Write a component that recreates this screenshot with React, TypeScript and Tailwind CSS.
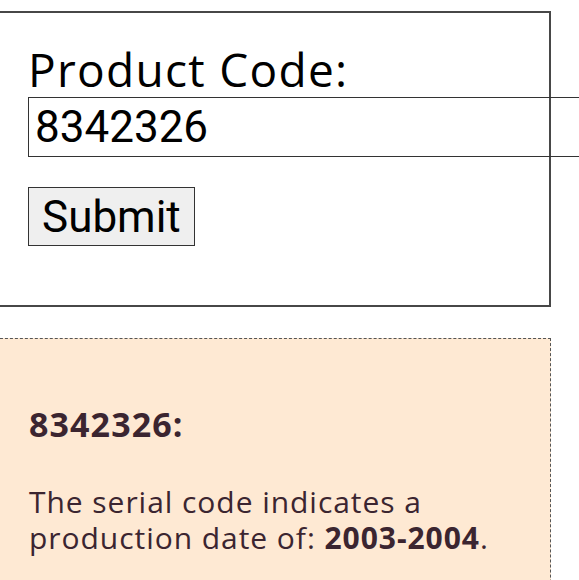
export default function App() {
  return (
    <div className="min-h-screen overflow-hidden bg-white">
      {/* Lookup form */}
      <form
        className="-ml-[10px] mt-[11px] flex h-[296px] w-[561px] flex-col border-2 border-[#474747] pl-[36px] pt-[33px]"
        onSubmit={(e) => e.preventDefault()}
      >
        <label
          htmlFor="code"
          className="block text-[46px] leading-[46px] tracking-[1.3px] text-black"
          style={{ fontFamily: '"Open Sans", sans-serif' }}
        >
          Product Code:
        </label>
        <input
          id="code"
          defaultValue="8342326"
          className="mt-[5px] h-[60px] w-[600px] shrink-0 border border-[#333] px-[6px] text-[44px] text-black outline-none"
          style={{ fontFamily: "Roboto, sans-serif" }}
        />
        <div>
          <button
            type="submit"
            className="mt-[30px] h-[59px] border border-[#333] bg-[#efefef] px-[13px] text-[44px] leading-none text-black"
            style={{ fontFamily: "Roboto, sans-serif" }}
          >
            Submit
          </button>
        </div>
      </form>

      {/* Result */}
      <div
        className="-ml-[10px] mt-[31px] h-[300px] w-[561px] border border-dashed border-[#555] bg-[#fee9d3] pl-[38px] pt-[65px] text-[#3b2530]"
        style={{ fontFamily: '"Open Sans", sans-serif' }}
      >
        <h3 className="text-[34px] font-bold leading-[40px] tracking-[1.1px]">8342326:</h3>
        <p className="mt-[40px] text-[30px] leading-[36px] tracking-[0.95px]">
          The serial code indicates a
          <br />
          production date of: <strong className="font-bold">2003-2004</strong>.
        </p>
      </div>
    </div>
  )
}
